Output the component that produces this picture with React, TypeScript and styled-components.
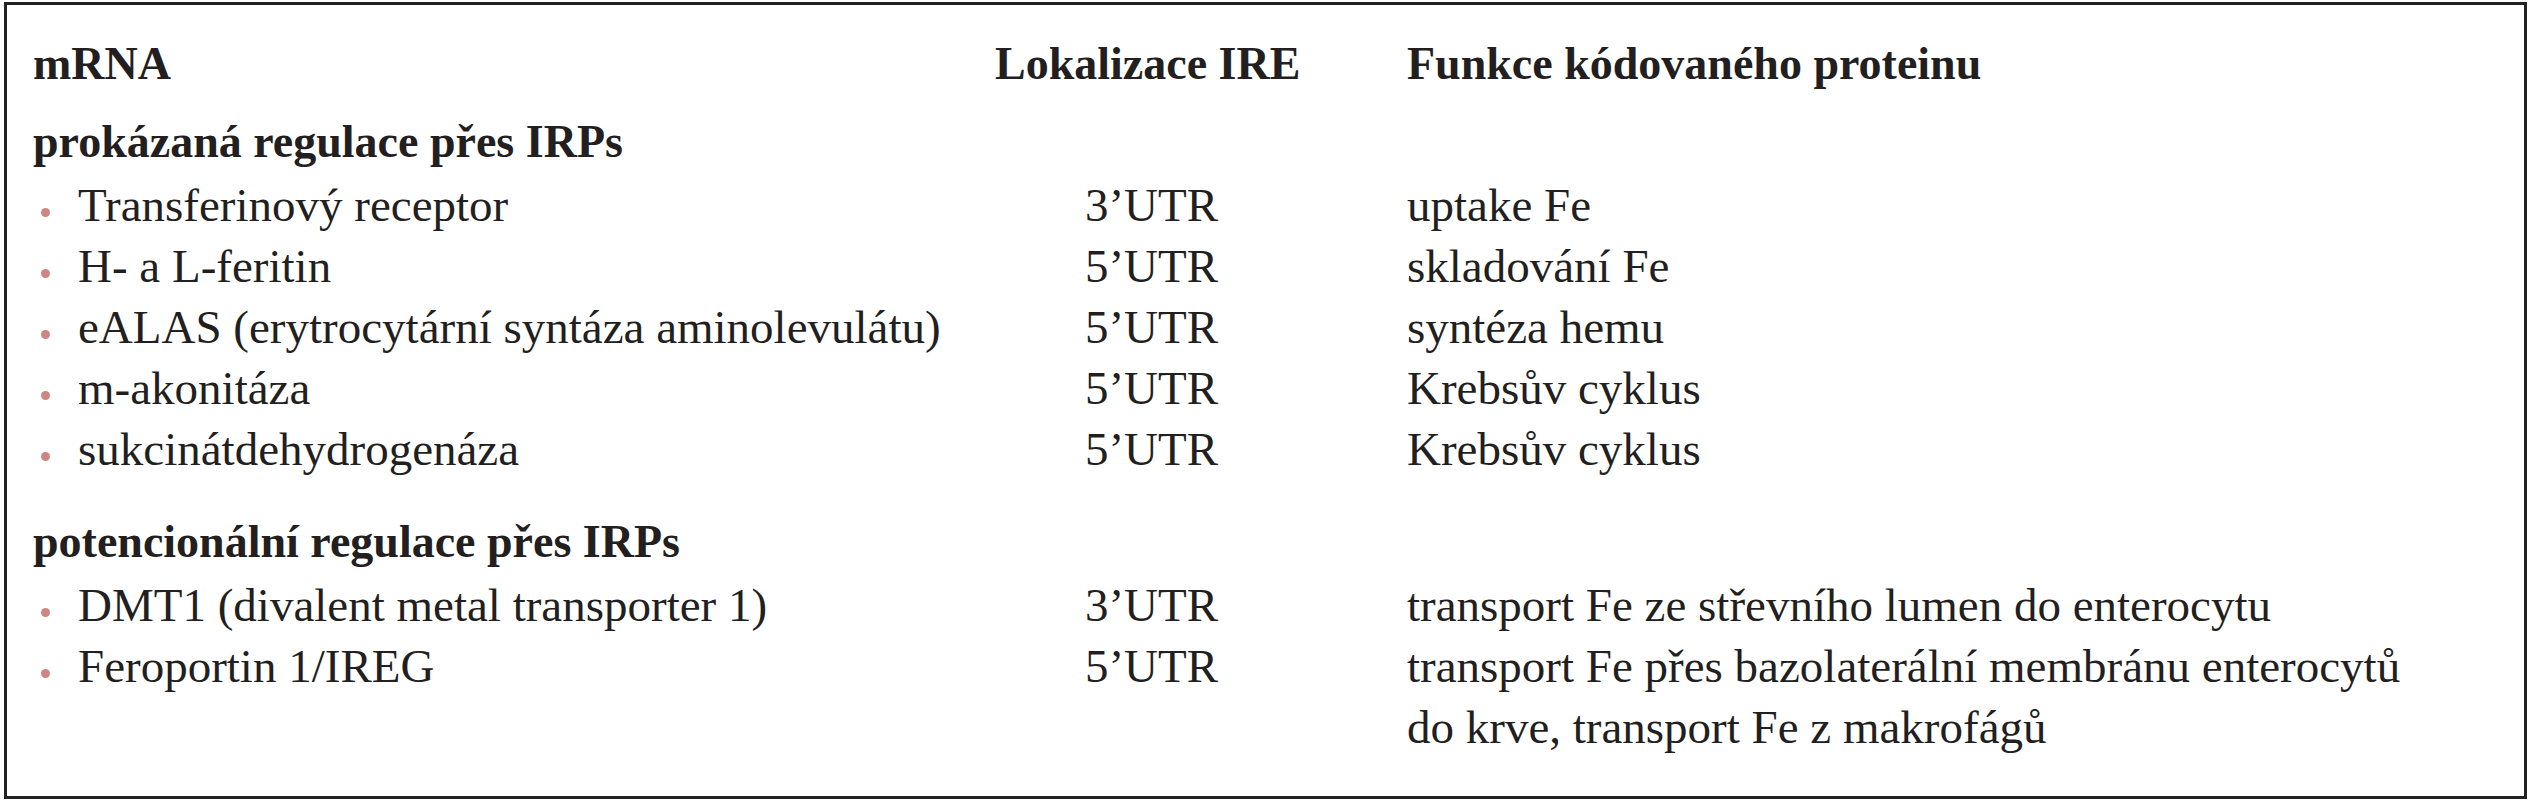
import * as React from 'react';
import styled, { createGlobalStyle } from 'styled-components';

const GlobalStyle = createGlobalStyle`
  html, body {
    margin: 0;
    padding: 0;
    background: #ffffff;
  }
  body {
    font-family: "Liberation Serif", "Times New Roman", serif;
    color: #231f20;
  }
`;

interface Polozka {
    mrna: string;
    lokalizace: string;
    funkce: string[];
}

interface Skupina {
    nazev: string;
    odsazeni: number;
    polozky: Polozka[];
}

const skupiny: Skupina[] = [
    {
        nazev: 'prokázaná regulace přes IRPs',
        odsazeni: 17,
        polozky: [
            {mrna: 'Transferinový receptor', lokalizace: '3’UTR', funkce: ['uptake Fe']},
            {mrna: 'H- a L-feritin', lokalizace: '5’UTR', funkce: ['skladování Fe']},
            {mrna: 'eALAS (erytrocytární syntáza aminolevulátu)', lokalizace: '5’UTR', funkce: ['syntéza hemu']},
            {mrna: 'm-akonitáza', lokalizace: '5’UTR', funkce: ['Krebsův cyklus']},
            {mrna: 'sukcinátdehydrogenáza', lokalizace: '5’UTR', funkce: ['Krebsův cyklus']},
        ],
    },
    {
        nazev: 'potencionální regulace přes IRPs',
        odsazeni: 31,
        polozky: [
            {mrna: 'DMT1 (divalent metal transporter 1)', lokalizace: '3’UTR', funkce: ['transport Fe ze střevního lumen do enterocytu']},
            {
                mrna: 'Feroportin 1/IREG',
                lokalizace: '5’UTR',
                funkce: ['transport Fe přes bazolaterální membránu enterocytů', 'do krve, transport Fe z makrofágů'],
            },
        ],
    },
];

const Ramecek = styled.section`
  box-sizing: border-box;
  width: 2523px;
  height: 797px;
  margin: 2px 0 0 4px;
  border: 3px solid #222222;
  padding: 28px 0 0 26px;
`;

const Tabulka = styled.div`
  display: grid;
  grid-template-columns: 863px 313px 1fr;
  column-gap: 99px;
  font-size: 47px;
  line-height: 61px;
`;

const Hlavicka = styled.div`
  font-weight: 700;
  font-size: 46px;
  white-space: nowrap;
`;

const NadpisSkupiny = styled.div<{ $odsazeni: number }>`
  grid-column: 1 / -1;
  font-weight: 700;
  font-size: 46px;
  margin-top: ${p => p.$odsazeni}px;
  margin-bottom: 3px;
  white-space: nowrap;
`;

const MrnaBunka = styled.div`
  display: flex;
  align-items: baseline;
  white-space: nowrap;
`;

const Odrazka = styled.span`
  flex: 0 0 auto;
  width: 9px;
  height: 9px;
  margin: 0 28px 0 8px;
  border-radius: 50%;
  background: #d08585;
  transform: translateY(-4px);
`;

const LokalizaceBunka = styled.div`
  text-align: center;
  white-space: nowrap;
`;

const FunkceBunka = styled.div`
  white-space: nowrap;
`;

function Radek({polozka}: { polozka: Polozka }) {
    return (
        <>
            <MrnaBunka>
                <Odrazka/>
                {polozka.mrna}
            </MrnaBunka>
            <LokalizaceBunka>{polozka.lokalizace}</LokalizaceBunka>
            <FunkceBunka>
                {polozka.funkce.map(r => <div key={r}>{r}</div>)}
            </FunkceBunka>
        </>
    );
}

function App() {
    return (
        <>
            <GlobalStyle/>
            <Ramecek>
                <Tabulka>
                    <Hlavicka>mRNA</Hlavicka>
                    <Hlavicka>Lokalizace IRE</Hlavicka>
                    <Hlavicka>Funkce kódovaného proteinu</Hlavicka>
                    {skupiny.map(s => (
                        <React.Fragment key={s.nazev}>
                            <NadpisSkupiny $odsazeni={s.odsazeni}>{s.nazev}</NadpisSkupiny>
                            {s.polozky.map(p => <Radek key={p.mrna} polozka={p}/>)}
                        </React.Fragment>
                    ))}
                </Tabulka>
            </Ramecek>
        </>
    );
}

export default App;
